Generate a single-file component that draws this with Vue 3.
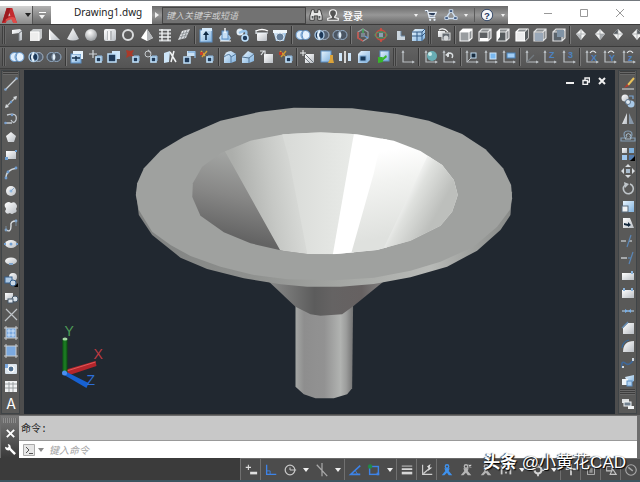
<script setup>
import { ref } from "vue";

const search = ref("");
const command = ref("");

// small building blocks shared by the 16x16 icons
const p = (d, fill = "url(#silver)", extra = "") => `<path d="${d}" fill="${fill}" ${extra}/>`;
const line = (d, stroke = "#dfe3e6", w = 1.2) => `<path d="${d}" fill="none" stroke="${stroke}" stroke-width="${w}"/>`;
const dot = (x, y, r, fill = "url(#silver)", extra = "") => `<circle cx="${x}" cy="${y}" r="${r}" fill="${fill}" ${extra}/>`;
const rect = (x, y, w, h, fill = "url(#silver)", extra = "") =>
  `<rect x="${x}" y="${y}" width="${w}" height="${h}" fill="${fill}" ${extra}/>`;
const letter = (t, x, y, fill, size = 9) =>
  `<text x="${x}" y="${y}" fill="${fill}" font-size="${size}" font-weight="700" font-family="Liberation Sans, sans-serif">${t}</text>`;

const blueEdge = 'stroke="#5c8fc4" stroke-width="1"';
const smallCube = rect(8, 8, 5, 5, "#203a58", 'stroke="#bfe0fa" stroke-width="1.6"') + line("M9 7H14V12", "#8db9e2", 1);
const axes = line("M3 2V13H14", "#b9bec2", 1.2) + p("M1.500 4 3 1 4.500 4zM12 11.500 15 13 12 14.500z", "#b9bec2");
const cube = (face, edge) =>
  p("M2 5 5 2H14V11L11 14H2z", "#8c9093") + rect(2, 5, 9, 9, face) + line("M2 5 5 2H14V11L11 14H2V5H11V14M11 5 14 2", edge, 1.2);
const diamond = (a, b) => p("M8 2 13 7 8 13 3 7z", "#f3f4f4") + p(a, b) + line("M8 2V13M3 7H13", "#9da1a5", 0.7);
const figure = (c) =>
  dot(8, 4, 2, "none", `stroke="${c}" stroke-width="1.500"`) + p("M5 6H11L10 9 14 14H10L8 11 5 14H2L6 9z", c);

const icons = {
  polysolid: p("M3 3 11 2 13 4V13L10 14V6L3 7z") + line("M10 14V6L13 4", "#747a80", 1),
  box: p("M2 5 5 2H14V11L11 14H2z", "#c4c7c9") + rect(2, 5, 9, 9, "#ededed") + line("M2 5H11V14", "#fff", 1),
  wedge: p("M3 2 14 13H3z") + p("M3 2V13H5z", "#fff"),
  cone: p("M8 1 14 12Q8 15 2 12z"),
  sphere: dot(8, 8, 6, "url(#ball)"),
  cylinder: rect(2, 2, 12, 12, "url(#silver)", 'rx="2"') + rect(5, 4, 5, 9, "#b7babd") + rect(6, 4, 2, 9, "#f5f5f5"),
  torus: dot(8, 8, 5, "none", 'stroke="#dadcdd" stroke-width="2"'),
  pyramid: p("M8 2 14 11 8 14 2 11z", "#fff") + p("M8 2 14 11 8 14z", "#b4b7ba"),
  helix: line("M2 3H14M2 6.500H14M2 10H14M2 13.500H14", "#c9ccce", 1.8) + line("M5 2V14M11 3V14", "#f1f3f3", 1.4),
  planar: p("M6 4 14 2 10 11 2 13z") + line("M8 4 5 12M11 3 8 12M5 7 13 5M3 10 11 8", "#888d91", 0.8),
  press: rect(2, 3, 12, 12, "url(#sky)", blueEdge) + rect(4, 1, 10, 3, "#d5eafc") + line("M8 13V6", "#102a44", 1.6) + p("M5 8 8 4 11 8z", "#102a44"),
  extrude: p("M2 11 4 8H12L14 11 12 14H4z", "url(#sky)") + rect(5, 4, 6, 8, "#c6dff4", blueEdge) + line("M8 6V1", "#fff", 1.3) + line("M3 14H14", "#fff", 1),
  sweep: dot(5, 5, 3.5, "#e2edf6") + line("M4 6Q13 1 11 8", "#9bc5e9", 2.5) + dot(10, 11, 3, "#203a58", 'stroke="#bfe0fa" stroke-width="1.600"'),
  revolve: line("M2 4Q8 1 14 4", "#fff", 1.3) + rect(3, 6, 10, 8, "url(#silver)", 'rx="1"') + line("M2 6H14M2 3V7", "#edf5fb", 1),
  loft: p("M1 3H15L12 14H4z", "url(#sky)") + rect(1, 3, 14, 3, "#eef6fb") + dot(8, 10, 4, "#657e98", 'stroke="#d9e7f3"'),
  union: p("M5 4A4 4 0 0 0 5 12H11A4 4 0 0 0 11 4z", "#e6f2fd") + dot(5.5, 8, 4.5, "#dcecfb", blueEdge) + dot(10.5, 8, 4.5, "#e6f2fd", blueEdge) + line("M8 4.500Q6 8 8 11.500", "#5c8fc4", 1),
  subtract: dot(10.5, 8, 4.5, "#536071", 'stroke="#a4b4c6"') + dot(5.5, 8, 4.5, "#1c3858", 'stroke="#a9c8e4" stroke-width="1.300"') + line("M6 4A5 5 0 0 0 6 12", "#e4f1fa", 2.2),
  intersect: dot(5.5, 8, 4.5, "#4b5663", 'stroke="#94adc7"') + dot(10.5, 8, 4.5, "#4b5663", 'stroke="#94adc7"') + p("M8 4.500A5 5 0 0 1 8 11.500A5 5 0 0 1 8 4.500z", "#e4f1fa"),
  gizmoMove: line("M8 2 13 5V11L8 14 3 11V5z", "#9da5ab", 1.2) + line("M8 8V2", "#42b35f", 1.4) + line("M3 5V11L8 14", "#c94d44", 1.4) + line("M8 8 13 11", "#629de0", 1.4) + rect(6, 6, 4, 4, "#7b8791"),
  gizmoTurn: dot(8, 8, 5, "none", 'stroke="#c94a40" stroke-width="1.400"') + `<ellipse cx="8" cy="8" rx="6" ry="3" fill="none" stroke="#4fa667"/>` + rect(6, 6, 4, 4, "#8c9fb0") + line("M8 1V4M8 12V15", "#d44d42", 1.5),
  gizmoOff: p("M5 4H9V9H13V13H5z", "#cbd6df") + p("M9 4V9H13", "none", 'stroke="#6b87a3"'),
  meshBox: p("M2 5 5 2H15V11L12 14H2z", "url(#sky)") + line("M2 5H12V14M12 5 15 2M7 5V14M2 9H12L15 6", "#315984", 1),
  sectionBox: p("M2 4H9V10H2z", "url(#silver)") + rect(6, 6, 8, 7, "#626970", 'stroke="#dedfe0"') + dot(10, 11, 2.5, "#d5d8da") + line("M3 3Q8 0 12 5", "#f3f4f4"),
  viewTop: cube("#999da0", "#f3f4f4") + p("M2 5 5 2H14L11 5z", "#fff"),
  viewBottom: cube("#5c6063", "#e4e5e6") + rect(3, 11, 8, 3, "#fff"),
  viewLeft: cube("#555a5d", "#e4e5e6") + p("M2 5 5 2V10L2 14z", "#fff"),
  viewRight: cube("#ebeced", "#fff") + p("M11 5 14 2V11L11 14z", "#595e61"),
  viewFront: cube("#929698", "#dfe0e1") + rect(3, 6, 8, 8, "#9aa8b8"),
  viewBack: cube("#5a636b", "#dfe0e1") + rect(6, 3, 7, 7, "#8093a5"),
  isoSW: diamond("M3 7 8 8 8 13z", "#b4b8bb"),
  isoSE: diamond("M8 7 13 7 8 13z", "#a8acb0"),
  isoNE: diamond("M8 2 3 7 8 7z", "#585e63"),
  isoNW: diamond("M8 2 13 7 8 7z", "#585e63"),
  faceExtrude: rect(2, 5, 10, 9, "url(#sky)", blueEdge) + p("M4 2H14V10H12V5H4z", "#e7f3fc") + line("M3 9H11M7 7V12", "#16304b", 1.4),
  faceMove: line("M5 1V9M1 5H9", "#cfd4d8", 1.2) + smallCube,
  faceOffset: rect(6, 2, 8, 8, "#cfe6f9") + rect(2, 5, 8, 8, "#203a58", 'stroke="#bfe0fa" stroke-width="1.500"'),
  faceDelete: p("M1 1 5 2 9 1 7 5 9 8 5 7 1 9 2 5z", "#a93a2a") + smallCube,
  faceRotate: dot(5, 5, 3, "none", 'stroke="#c4c9cd"') + line("M5 1 8 4", "#c4c9cd") + smallCube,
  faceTaper: p("M2 4 8 2 7 13 2 14z", "#cde5f8") + line("M8 3 14 13M12 2 9 13", "#f1f3f4", 1.5),
  faceCopy: rect(6, 2, 8, 5, "#cbe2f5") + line("M7 3H14V9", "#87b4df", 1.3) + rect(3, 8, 6, 6, "#203a58", 'stroke="#bfe0fa" stroke-width="1.500"'),
  faceColor: line("M2 2 6 7M8 2 3 8", "#d7a335", 1.4) + rect(1, 3, 3, 3, "#c5412d") + smallCube,
  edgeFillet: p("M2 8Q3 2 9 2L14 5V12L9 14H2z", "url(#sky)") + line("M2 8Q8 3 9 8V14M9 8 14 5", "#52799f", 1),
  edgeChamfer: p("M2 8 8 2 14 5V12L9 14H2z", "url(#sky)") + line("M2 8 9 9V14M9 9 14 5", "#527291", 1),
  edgeCopy: rect(5, 5, 9, 9) + line("M1 2H6V6M5 2 2 6", "#dfe3e6"),
  edgeColor: line("M2 2 7 7M8 2 3 8", "#d19a31", 1.4) + rect(1, 3, 3, 3, "#b83b2b") + smallCube,
  imprint: rect(5, 5, 9, 9) + line("M5 5 14 14M5 9 10 14", "#747c83", 1) + line("M3 1V7M0 4H6", "#f1f3f4", 1),
  clean: rect(2, 2, 10, 11, "url(#sky)", blueEdge) + p("M11 6H14V10L15 14H9L11 10z", "#dba33a"),
  separate: rect(2, 4, 3, 8, "#cfe6fa") + rect(11, 4, 3, 8, "#cfe6fa") + line("M8 2V14", "#fff", 1.5),
  shell: p("M2 5 5 2H14V11L11 14H2z", "url(#sky)") + rect(4, 7, 6, 5, "#193958", 'stroke="#80abd4"'),
  check: rect(5, 2, 9, 10, "url(#sky)", blueEdge) + p("M3 8 8 8 7 9.500 11 6 12 8 8 11.500V13L3 14z", "#38b52d"),
  ucs: axes,
  ucsWorld: axes + dot(9, 7, 5, "#68adb4") + dot(7, 5, 2, "#c9ecea"),
  ucsPrev: axes + line("M7 8Q5 4 9 4Q13 5 11 9", "#d9dddf", 1.5) + p("M4 6 8 3V8z", "#d9dddf"),
  ucsFace: axes + rect(7, 4, 6, 6, "#7ab8ef", 'stroke="#cfe6fa"'),
  ucsObject: axes + line("M3 13 8 8", "#b9bec2", 1) + rect(7, 4, 5, 5, "#172b3e", 'stroke="#c5e1f5"'),
  ucsView: axes + rect(6, 4, 8, 5, "#a3cef5", 'stroke="#4881b8"'),
  ucsOrigin: axes + line("M3 13 10 6", "#71797f"),
  ucsZ: axes + letter("Z", 7, 9, "#4d82c0"),
  ucs3: axes + letter("3", 7, 9, "#4d82c0"),
  ucsX: axes + letter("X", 7, 12, "#4d82c0") + line("M6 4Q9 0 12 4", "#e4e7e9"),
  ucsY: axes + letter("Y", 7, 12, "#4d82c0") + line("M6 4Q9 0 12 4", "#e4e7e9"),
  ucsZr: axes + letter("z", 7, 12, "#4d82c0") + line("M6 4Q9 0 12 4", "#e4e7e9"),

  line: line("M3 13 13 3", "#cfd4d8") + dot(2.5, 13.5, 1.3, "#81a5ce") + dot(13.5, 2.5, 1.3, "#81a5ce"),
  xline: line("M3 13 13 3", "#c1c6c9") + p("M2 14 3 10 6 13zM14 2 10 3 13 6z", "#d4d8da") + dot(8, 8, 1.2, "#6d9bce"),
  pline: line("M4 4Q15 1 13 9Q11 14 8 9M2 12H9", "#c4cad0", 1.3) + dot(2.5, 12, 1.3, "#789fcd") + dot(9, 4, 1.3, "#789fcd"),
  polygon: p("M8 3 13 7 11 13H5L3 7z"),
  rectangle: rect(3, 4, 10, 8) + rect(2, 10, 3, 3, "#6e9ed0") + rect(12, 3, 2, 2, "#6e9ed0"),
  arc: line("M3 14Q2 5 14 3", "#cfd5d9", 1.3) + dot(3, 13, 1.4, "#719fd2") + dot(5, 7, 1.4, "#719fd2") + dot(13, 3, 1.4, "#719fd2"),
  circle: dot(8, 8, 5) + dot(8, 8, 1.5, "#8eb7df") + line("M8 8 11 5", "#86aad0", 1),
  revcloud: p("M3 3Q6 1 8 3Q12 1 13 4Q15 6 13 9Q15 12 11 13Q9 15 7 13Q3 15 2 11Q4 9 2 7Q1 4 3 3z"),
  spline: line("M3 12Q8 15 8 8Q7 3 13 3", "#d7dce0", 1.4) + dot(3, 12, 1.4, "#83a9d3") + dot(13, 3, 1.4, "#83a9d3") + line("M3 13V8M13 8V3", "#7f95aa", 0.8),
  ellipse: `<ellipse cx="8" cy="8" rx="6" ry="4" fill="url(#silver)"/>` + dot(8, 8, 1.5, "#719fd2") + rect(1, 7, 2, 2, "#719fd2") + rect(13, 7, 2, 2, "#719fd2"),
  ellipseArc: `<ellipse cx="8" cy="7" rx="6" ry="3.500" fill="url(#silver)"/>` + rect(6, 9, 4, 2, "#84a7cd"),
  insert: dot(10, 5, 4) + rect(2, 5, 7, 6, "#adc9e4", 'stroke="#37618e"') + dot(10, 11, 3, "#c9d8e6", 'stroke="#37618e"') + p("M15 11V15H11z", "#000"),
  block: rect(2, 4, 8, 7) + dot(12, 10, 3, "#d8e1e9", 'stroke="#46586a"') + rect(5, 10, 5, 4, "#dfe6ed", 'stroke="#46586a"'),
  point: line("M3 2Q7 6 14 13M2 14 14 2", "#bfc4c8"),
  hatch: rect(3, 3, 10, 10, "#7ba9df") + line("M4 6H12M4 10H12M6 4V12M10 4V12", "#dbeafa", 0.8) + line("M1 3H15M1 13H15M3 1V15M13 1V15", "#c9cdd0", 1),
  gradient: rect(3, 3, 10, 10, "#7ba9df") + line("M1 3H15M1 13H15M3 1V15M13 1V15", "#c9cdd0", 1),
  region: rect(2, 3, 12, 10, "#dce6ee", 'rx="1"') + dot(8, 8, 3, "#4f7090", 'stroke="#fff" stroke-width="1.200"') + rect(2, 3, 3, 4, "#7ba9df"),
  table: rect(2, 3, 12, 11, "#f0f2f3") + line("M2 6H14M2 10H14M6 4V14M10 4V14", "#92979b", 0.9),
  text: `<text x="8" y="13" text-anchor="middle" fill="#fff" font-size="14" font-family="Inter, sans-serif">A</text>`,

  erase: line("M14 2 8 9", "#e8c15a", 2) + p("M7 8 9 10 4 12z", "#b63e30") + line("M2 13H14", "#dadddf", 1),
  copy: dot(5, 5, 3.5) + dot(11, 11, 3.5, "#a8c8e6") + line("M9 3H13V6", "#79a6d3") + dot(8, 9, 2.5, "#dde8f1", 'stroke="#5d7690"'),
  mirror: p("M7 2V13H2z") + p("M9 2V13H14z", "#8797a8"),
  offset: line("M1 13H15V10H11Q14 3 8 3Q2 3 5 10H1z", "#829bb2", 1.2) + line("M5 11H11Q9 8 11 7Q8 4 6 7Q8 8 5 11z", "#a9bdcd", 1),
  array: rect(2, 2, 5, 5) + rect(9, 2, 5, 5, "#7fb1de") + rect(2, 9, 5, 5, "#a0c7ed") + rect(9, 9, 5, 5, "#547db0") + p("M15 10V15H10z", "#000"),
  move: p("M8 1 11 4H5zM8 15 5 12H11zM1 8 4 5V11zM15 8 12 11V5z", "#d8dcdf") + rect(6, 6, 4, 4, "#a9bccd"),
  rotate: line("M5 4A5 5 0 1 0 10 3", "#bfc5c9", 1.6) + p("M4 1 9 3 5 7z", "#bfc5c9"),
  scale: rect(3, 3, 11, 11, "url(#sky)") + rect(2, 8, 6, 6, "#f1f3f4", 'stroke="#596b7c"'),
  stretch: p("M3 3H10L14 13H3z") + p("M4 8 8 9V7L11 10 8 12V11L4 10z", "#14283c"),
  trim: line("M1 8H6M9 8H12", "#b5babd", 1.3) + line("M11 2 7 14", "#5a86b6", 1.2),
  extend: line("M1 8H7", "#d1d5d8", 1.3) + line("M8 8H11", "#5a86b6") + line("M13 2 9 14", "#5a86b6"),
  breakPoint: rect(2, 5, 12, 7) + rect(11, 3, 2, 3, "#8ab5df"),
  breakTwo: rect(2, 5, 12, 8) + rect(3, 3, 2, 3, "#8ab5df") + rect(11, 3, 2, 3, "#8ab5df"),
  join: line("M2 8H14", "#a7c3de", 1.2) + p("M5 6 8 8 5 10zM11 6 8 8 11 10z", "#76aee7"),
  chamfer: p("M3 14V8L8 3H14V14z") + line("M2 8 8 2", "#618bb5"),
  fillet: p("M3 14Q3 3 14 3V14z") + line("M2 10Q3 3 9 2", "#376a9e"),
  blend: line("M2 13Q1 5 5 8Q9 12 14 4", "#3f689a", 1.6) + rect(2, 11, 2, 2, "#ced7df") + rect(12, 3, 2, 3, "#ced7df"),
  explode: p("M5 4 14 2V8L8 11z", "url(#sky)") + rect(2, 6, 6, 6, "#eff4f8") + rect(7, 8, 5, 5, "#b0d1ef", blueEdge),
  order: rect(2, 3, 7, 4, "#dfe2e4") + rect(4, 6, 7, 4, "#71808e", 'stroke="#f1f3f4"') + rect(8, 10, 6, 3, "#f1f3f4"),

  infer: line("M2 5H8M5 2V8", "#e0e0e0") + rect(7, 10, 8, 3, "#e0e0e0"),
  ortho: line("M3 2V13H14", "#3d83e8", 1.5) + line("M3 9H7V13", "#3d83e8", 1),
  polar: dot(8, 8, 5.5, "none", 'stroke="#c9c9c9" stroke-width="1.400"') + line("M8 8H15M8 8V5", "#c9c9c9"),
  isodraft: line("M2 2 14 15M8 0V15", "#a9a9a9", 1.4),
  track: line("M14 3 3 13H14", "#3d83e8", 1.8) + line("M8 8 11 13", "#3d83e8", 1),
  osnap: rect(3, 4, 10, 9, "none", 'stroke="#3d83e8" stroke-width="1.600"') + dot(3.5, 4, 2.5, "#218a46") + rect(11, 11, 3, 3, "#3d83e8"),
  weight: rect(2, 3, 12, 1, "#d6d6d6") + rect(2, 6, 12, 2, "#d6d6d6") + rect(2, 10, 12, 3, "#d6d6d6"),
  ducs: line("M3 2V13H14M4 12 11 6", "#d0d0d0", 1.3) + p("M8 4 12 1 11 5 14 5 9 9 10 6z", "#e0e0e0"),
  annoVisible: figure("#3f91ec"),
  annoAuto: figure("#b5b5b5") + line("M11 2 14 5M14 2 11 5", "#ddd"),
  annoScale: figure("#b5b5b5"),
  ratio: rect(2, 3, 2, 10, "#ccc") + rect(7, 5, 2, 2, "#ccc") + rect(7, 10, 2, 2, "#ccc") + rect(12, 3, 2, 10, "#ccc"),
  workspace: dot(8, 8, 4, "none", 'stroke="#d5d5d5" stroke-width="2.400"') + line("M8 1V4M8 12V15M1 8H4M12 8H15", "#d5d5d5", 2),
  monitor: line("M8 1V14M2 7H14", "#e0e0e0", 1.8),
  isolate: rect(4, 3, 8, 10, "none", 'stroke="#b9b9b9"') + line("M7 6V11M9 6V11", "#b9b9b9"),
  hardware: line("M3 4H9V9H3zM7 13 10 7 14 13z", "#c5c5c5"),
  cleanScreen: dot(8, 8, 6, "none", 'stroke="#a9a9a9" stroke-width="1.300"') + line("M5 5 10 9", "#a9a9a9", 1.5)
};

// "|" is a divider, "#" is the grip where the next toolbar begins
const toolbars = [
  {
    name: "modeling",
    items: ("polysolid box wedge cone sphere cylinder torus pyramid helix planar | press extrude sweep revolve loft | " +
      "union subtract intersect | gizmoMove gizmoTurn gizmoOff meshBox # sectionBox | " +
      "viewTop viewBottom viewLeft viewRight viewFront viewBack | isoSW isoSE isoNE isoNW").split(" ")
  },
  {
    name: "solid-editing",
    items: ("union subtract intersect | faceExtrude faceMove faceOffset faceDelete faceRotate faceTaper faceCopy faceColor | " +
      "edgeFillet edgeChamfer edgeCopy edgeColor | imprint clean separate shell check # ucs | ucsWorld ucsPrev | " +
      "ucsObject ucsFace ucsView | ucsOrigin ucsZ ucs3 | ucsX ucsY ucsZr").split(" ")
  }
];

const drawTools = ("line xline pline polygon rectangle arc circle revcloud spline ellipse ellipseArc insert block point " +
  "hatch gradient region table text").split(" ");

const modifyTools = ("erase copy mirror offset array move rotate scale stretch trim extend breakPoint breakTwo join " +
  "chamfer fillet blend explode").split(" ");

// "v" opens the menu of the tool before it
const statusTools = ("infer ortho polar v isodraft v track osnap v weight ducs annoVisible annoAuto annoScale ratio v " +
  "workspace v monitor isolate hardware cleanScreen").split(" ");
const divided = ["infer", "ortho", "track", "weight", "ducs", "annoVisible", "monitor", "isolate", "hardware", "cleanScreen"];
</script>

<template>
  <div class="app">
    <!-- shared fills -->
    <svg class="defs" width="0" height="0" aria-hidden="true">
      <defs>
        <linearGradient id="silver" x1="0" y1="0" x2="1" y2="1">
          <stop offset="0" stop-color="#ffffff" />
          <stop offset="1" stop-color="#b9bec4" />
        </linearGradient>
        <linearGradient id="sky" x1="0" y1="0" x2="1" y2="1">
          <stop offset="0" stop-color="#e8f4fd" />
          <stop offset="1" stop-color="#7fb1de" />
        </linearGradient>
        <radialGradient id="ball" cx="0.4" cy="0.3" r="0.8">
          <stop offset="0" stop-color="#ffffff" />
          <stop offset="1" stop-color="#8b8f93" />
        </radialGradient>
      </defs>
    </svg>

    <header class="titlebar">
      <button class="app-menu" aria-label="Application menu">
        <svg class="logo" viewBox="0 0 16 18">
          <path d="M5 1H11L16 17H12L10 12 6 13 4 17H0z" fill="#c32b2e" />
          <path d="M7 5 9 9 6 10z" fill="#d4c5c5" />
          <path d="M0 17 6 13 9 1H5z" fill="#9c1b20" />
          <path d="M4 13Q11 9 14 12L16 17H12L10 13 4 15z" fill="#df4c49" />
        </svg>
        <i class="caret dark"></i>
      </button>
      <button class="quick" aria-label="Customize quick access"><i class="bar"></i><i class="caret"></i></button>
      <span class="doc">Drawing1.dwg</span>
      <div class="infocenter">
        <button class="expand" aria-label="Expand search"><i class="caret side-caret"></i></button>
        <input v-model="search" class="search" type="text" aria-label="搜索" placeholder="键入关键字或短语" />
        <button class="tool find" aria-label="Find">
          <svg viewBox="0 0 16 16">
            <path d="M3 2H6V5H10V2H13L15 9V14H10V9H6V14H1V9z" fill="#e8e8e8" stroke="#333" />
            <path d="M3 9H5V12H3zM11 9H13V12H11z" fill="#55595c" />
          </svg>
        </button>
        <button class="login">
          <svg viewBox="0 0 16 16">
            <path d="M8 2Q12 2 12 6Q12 8 10 10V11L14 12V14H2V12L6 11V10Q4 8 4 6Q4 2 8 2z" fill="#555" stroke="#f5f5f5" stroke-width="1.4" />
          </svg>
          登录
        </button>
        <span class="space"></span>
        <button class="drop" aria-label="Account menu"><i class="caret small"></i></button>
        <button class="tool" aria-label="App store">
          <svg viewBox="0 0 16 16">
            <path d="M1 3H4L6 11H13M5 5H14L12 9H6" fill="#2d3f5b" stroke="#e4edf8" stroke-width="1.4" />
            <circle cx="7" cy="13.500" r="1.300" fill="#e4edf8" />
            <circle cx="12" cy="13.500" r="1.300" fill="#e4edf8" />
          </svg>
        </button>
        <button class="tool" aria-label="Connected services">
          <svg viewBox="0 0 16 16">
            <path d="M8 3 14 12H2z" fill="none" stroke="#cfe0f2" stroke-width="1.6" />
            <path d="M6 2H10V5H6zM1 10H5V13H1zM11 10H15V13H11z" fill="#2e4b77" stroke="#dce9f7" />
          </svg>
        </button>
        <button class="drop" aria-label="Services menu"><i class="caret small"></i></button>
        <button class="tool help" aria-label="Help">
          <svg viewBox="0 0 16 16">
            <circle cx="8" cy="8" r="6.500" fill="#f4f7fb" stroke="#24395c" />
            <text x="8" y="12" text-anchor="middle" font-size="11" font-weight="700" font-family="Liberation Sans, sans-serif" fill="#1d3765">?</text>
          </svg>
        </button>
        <button class="drop" aria-label="Help menu"><i class="caret small"></i></button>
      </div>
      <div class="window-buttons">
        <button aria-label="Minimize"><svg viewBox="0 0 10 10"><path d="M1 5.500H9" /></svg></button>
        <button aria-label="Maximize"><svg viewBox="0 0 10 10"><path d="M1.500 1.500H8.500V8.500H1.500z" /></svg></button>
        <button aria-label="Close"><svg viewBox="0 0 10 10"><path d="M1 1 9 9M9 1 1 9" /></svg></button>
      </div>
    </header>

    <nav v-for="bar in toolbars" :key="bar.name" class="toolbar" :class="bar.name">
      <i class="grip"></i>
      <template v-for="(item, i) in bar.items" :key="i">
        <i v-if="item === '|'" class="divider"></i>
        <i v-else-if="item === '#'" class="grip"></i>
        <button v-else :aria-label="item"><svg viewBox="0 0 16 16" v-html="icons[item]"></svg></button>
      </template>
    </nav>

    <main class="workspace">
      <nav class="side left">
        <i class="handle"></i>
        <button v-for="t in drawTools" :key="t" :aria-label="t"><svg viewBox="0 0 16 16" v-html="icons[t]"></svg></button>
      </nav>

      <section class="viewport">
        <svg class="scene" viewBox="0 0 590 344" role="img" aria-label="Funnel model">
          <defs>
            <linearGradient id="bowl" gradientUnits="userSpaceOnUse" x1="300" y1="420" x2="350" y2="180">
              <stop offset="0" stop-color="#636363" />
              <stop offset="0.500" stop-color="#878786" />
              <stop offset="1" stop-color="#a3a5a3" />
            </linearGradient>
            <linearGradient id="facetA" gradientUnits="userSpaceOnUse" x1="340" y1="220" x2="540" y2="190">
              <stop offset="0" stop-color="#acaeab" />
              <stop offset="0.500" stop-color="#c6c8c5" />
              <stop offset="1" stop-color="#dcdedb" />
            </linearGradient>
            <linearGradient id="facetB" gradientUnits="userSpaceOnUse" x1="500" y1="0" x2="700" y2="0">
              <stop offset="0" stop-color="#d9dbd8" />
              <stop offset="1" stop-color="#e9ebe8" />
            </linearGradient>
            <linearGradient id="facetC" gradientUnits="userSpaceOnUse" x1="780" y1="170" x2="830" y2="420">
              <stop offset="0" stop-color="#ffffff" />
              <stop offset="0.350" stop-color="#f2f3f1" />
              <stop offset="1" stop-color="#dfe1de" />
            </linearGradient>
            <linearGradient id="facetD" gradientUnits="userSpaceOnUse" x1="870" y1="240" x2="980" y2="300">
              <stop offset="0" stop-color="#fdfdfd" />
              <stop offset="0.350" stop-color="#dfe1de" />
              <stop offset="1" stop-color="#bdbfbc" />
            </linearGradient>
            <linearGradient id="rim" x1="0" y1="0" x2="1" y2="0">
              <stop offset="0" stop-color="#7f8180" />
              <stop offset="0.300" stop-color="#8e908e" />
              <stop offset="0.550" stop-color="#a5a7a4" />
              <stop offset="0.780" stop-color="#b8bab7" />
              <stop offset="1" stop-color="#878987" />
            </linearGradient>
            <linearGradient id="neck" x1="0" y1="0" x2="1" y2="0">
              <stop offset="0" stop-color="#8b8c8b" />
              <stop offset="0.400" stop-color="#5c5c5c" />
              <stop offset="0.550" stop-color="#656363" />
              <stop offset="0.800" stop-color="#666161" />
              <stop offset="1" stop-color="#858484" />
            </linearGradient>
            <linearGradient id="stem" x1="0" y1="0" x2="1" y2="0">
              <stop offset="0" stop-color="#a5a7a5" />
              <stop offset="0.150" stop-color="#8e8e8e" />
              <stop offset="0.500" stop-color="#929292" />
              <stop offset="0.780" stop-color="#b1b3b1" />
              <stop offset="0.880" stop-color="#9c9d9c" />
              <stop offset="1" stop-color="#727272" />
            </linearGradient>
            <linearGradient id="green">
              <stop offset="0" stop-color="#0b5c12" />
              <stop offset="0.500" stop-color="#1f8026" />
              <stop offset="1" stop-color="#0a4f10" />
            </linearGradient>
            <clipPath id="mouth">
              <path d="M217 265 245 215 300 175 390 137 490 118 600 112 710 118 820 137 900 168 965 210 1000 255 1012 300 995 350 960 392 870 437 770 465 640 478 560 477 490 468 390 445 310 412 240 362 215 305z" />
            </clipPath>
          </defs>
          <g transform="translate(96 25) scale(0.3333)">
            <path d="M525 620V875L550 898 585 910H640L680 898 695 880 698 620z" fill="url(#stem)" />
            <path d="M440 555 525 635 570 658 600 662 665 658 700 632 795 555z" fill="url(#neck)" />
            <path d="M46 290 55 360 95 420 180 488 260 522 370 550 480 568 560 575H660L760 567 870 547 980 515 1070 467 1140 405 1170 360 1175 290z" fill="url(#rim)" />
            <path d="M46 300 50 265 70 220 120 167 190 125 300 77 420 50 520 38 695 40 830 57 925 77 1025 117 1095 163 1148 220 1172 270 1175 310 1168 345 1130 395 1060 455 960 500 870 527 760 548 640 556 500 553 400 540 300 515 210 483 150 450 95 410 55 345z" fill="#9fa19f" />
            <g clip-path="url(#mouth)">
              <path d="M200 100H1020V490H200z" fill="url(#bowl)" />
              <path d="M275 100 325 190 487 480V490H700V100z" fill="url(#facetA)" />
              <path d="M480 100 505 190 563 490H700V100z" fill="url(#facetB)" />
              <path d="M703 100 635 490H800V100z" fill="#ffffff" />
              <path d="M800 60 760 235 688 490H1020V60z" fill="url(#facetC)" />
              <path d="M960 100 920 185 775 490H1020V100z" fill="url(#facetD)" />
            </g>
          </g>
          <!-- UCS tripod -->
          <path d="M40 300 71 291 72 296 42 306z" fill="#b3252b" />
          <path d="M42 301 71 292" stroke="#e05a5a" />
          <rect x="38" y="269" width="5" height="34" fill="url(#green)" />
          <ellipse cx="40.500" cy="269" rx="2.500" ry="1.500" fill="#a3d7a0" />
          <path d="M38 304 40 301 64 313 62 318z" fill="#1761d2" />
          <circle cx="40" cy="303" r="2.500" fill="#4b8ff0" />
          <g class="axis-names">
            <text x="40" y="266" fill="#4d9b57">Y</text>
            <text x="69" y="289" fill="#bd3a42">X</text>
            <text x="62" y="315" fill="#2d6ed8">Z</text>
          </g>
        </svg>
        <div class="view-buttons">
          <button aria-label="Minimize view"><svg viewBox="0 0 8 8"><path d="M0 6H8" /></svg></button>
          <button aria-label="Restore view"><svg viewBox="0 0 8 8"><path d="M3 3V1H7.500V5H6M1 3.500H5.500V7.500H1z" stroke-width="1.4" /></svg></button>
          <button aria-label="Close view"><svg viewBox="0 0 8 8"><path d="M1 1 7 7M7 1 1 7" /></svg></button>
        </div>
      </section>

      <nav class="side right">
        <i class="handle"></i>
        <button v-for="t in modifyTools" :key="t" :aria-label="t"><svg viewBox="0 0 16 16" v-html="icons[t]"></svg></button>
        <i class="handle second"></i>
        <button aria-label="order"><svg viewBox="0 0 16 16" v-html="icons.order"></svg></button>
      </nav>
    </main>

    <section class="command">
      <div class="command-handle">
        <i class="dots"></i>
        <button aria-label="Close command line"><svg viewBox="0 0 12 12"><path d="M2 2 10 10M10 2 2 10" stroke="#fff" stroke-width="2" /></svg></button>
        <button aria-label="Customize">
          <svg viewBox="0 0 12 12"><path d="M4 4 11 11" stroke="#fff" stroke-width="2.600" /><path d="M3 0 4 3 3 4 0 3Q0 7 4 7 7 6 6 2 5 0 3 0z" fill="#fff" /></svg>
        </button>
      </div>
      <div class="command-body">
        <div class="history">命令:</div>
        <div class="prompt">
          <button aria-label="Recent commands">
            <svg viewBox="0 0 12 12"><path d="M.500.500H11.500V11.500H.500z" fill="#e6e6e6" stroke="#aaa" /><path d="M3 3 6 6 3 9M6 9.500H10" fill="none" stroke="#555" /></svg>
            <i class="caret grey"></i>
          </button>
          <input v-model="command" type="text" aria-label="命令" placeholder="键入命令" />
        </div>
      </div>
    </section>

    <footer class="status">
      <template v-for="(t, i) in statusTools" :key="i">
        <button v-if="t === 'v'" class="more" aria-label="More"><i class="caret"></i></button>
        <button v-else :class="{ divided: divided.includes(t) }" :aria-label="t"><svg viewBox="0 0 16 16" v-html="icons[t]"></svg></button>
      </template>
    </footer>

    <div class="watermark"><b>头条</b> @小黄花CAD</div>
  </div>
</template>

<style>
body {
  margin: 0;
  background: #3b3b3b;
}
</style>

<style scoped>
.app {
  position: relative;
  display: flex;
  flex-direction: column;
  height: 100vh;
  min-height: 460px;
  overflow: hidden;
  box-sizing: border-box;
  border-bottom: 2px solid #3c5560;
  background: #555;
  font-family: "Noto Sans", "Noto Sans CJK SC", sans-serif;
  font-size: 11px;
}

.defs {
  position: absolute;
}

button {
  display: flex;
  align-items: center;
  justify-content: center;
  padding: 0;
  border: 0;
  background: none;
  color: #fff;
  font: inherit;
}

svg {
  display: block;
  flex: none;
}

input {
  min-width: 0;
  padding: 0;
  border: 0;
  outline: 0;
  font: inherit;
}

.caret {
  border: 3px solid transparent;
  border-top: 4px solid #f0f0f0;
  border-bottom: 0;
}

.caret.dark {
  border-top-color: #222;
}

.caret.small {
  border-width: 3px 2px 0;
}

.caret.grey {
  border-top-color: #888;
}

.caret.side-caret {
  border: 3px solid transparent;
  border-left: 4px solid #f0f0f0;
  border-right: 0;
}

/* title bar */
.titlebar {
  display: flex;
  flex: none;
  align-items: flex-end;
  height: 24px;
  box-sizing: border-box;
  border-top: 1px solid #73787d;
  background: #fff;
}

.app-menu {
  gap: 8px;
  width: 33px;
  height: 18px;
  border-right: 1px solid #555;
  background: linear-gradient(#d2d2d2, #8a8a8a);
}

.logo {
  width: 15px;
  height: 17px;
}

.quick {
  flex-direction: column;
  gap: 2px;
  width: 18px;
  height: 18px;
  background: linear-gradient(#b0b0b0, #696969);
}

.quick .bar {
  width: 7px;
  height: 1px;
  background: #fff;
}

.doc {
  width: 101px;
  box-sizing: border-box;
  padding-left: 23px;
  color: #222;
  font-size: 10px;
  line-height: 23px;
  white-space: nowrap;
}

.infocenter {
  display: flex;
  flex: 1;
  align-items: center;
  height: 18px;
  background: linear-gradient(#6b6b6b, #979797 50%, #6a6a6a);
}

.expand {
  width: 10px;
  height: 18px;
}

.search {
  width: 144px;
  height: 17px;
  box-sizing: border-box;
  padding-left: 3px;
  border: 1px solid #444;
  background: #727272;
  color: #eee;
  font-style: italic;
  font-size: 9px;
}

.search::placeholder {
  color: #d0d0d0;
}

.tool {
  width: 20px;
}

.tool svg {
  width: 14px;
  height: 14px;
}

.login {
  gap: 3px;
  font-weight: 500;
  font-size: 10px;
}

.login svg {
  width: 14px;
  height: 14px;
}

.space {
  flex: 1;
}

.drop {
  width: 10px;
  height: 18px;
}

.help {
  width: 24px;
  margin-left: 3px;
  border-left: 1px solid #5c5c5c;
}

.window-buttons {
  display: flex;
  width: 132px;
  height: 23px;
  box-sizing: border-box;
  padding: 0 2px 0 22px;
}

.window-buttons button {
  flex: 1;
}

.window-buttons svg {
  width: 10px;
  height: 10px;
  fill: none;
  stroke: #999;
}

/* horizontal toolbars */
.toolbar {
  display: flex;
  flex: none;
  align-items: center;
  height: 22px;
  box-sizing: border-box;
  padding: 0 0 1px 1px;
  border-top: 1px solid #3b3b3b;
  background: linear-gradient(#626262, #545454);
}

.toolbar.modeling {
  margin-right: -6px;
}

.toolbar.solid-editing {
  padding-right: 2px;
}

.toolbar button {
  flex: 1;
  min-width: 0;
}

.toolbar svg {
  width: 16px;
  height: 16px;
}

.divider {
  width: 2px;
  height: 18px;
  margin: 0 1px;
  box-sizing: border-box;
  border-left: 1px solid #383838;
  border-right: 1px solid #777;
}

.grip {
  width: 4px;
  height: 18px;
  margin: 0 2px 0 1px;
  background: repeating-linear-gradient(90deg, #3e3e3e 0 1px, #686868 1px 2px);
}

/* drawing area with its side toolbars */
.workspace {
  display: flex;
  flex: 1;
  min-height: 0;
  box-sizing: border-box;
  padding: 1px 3px 1px 1px;
  border-top: 1px solid #3e3e3e;
  background: #4d4d4d;
}

.side {
  display: flex;
  flex: none;
  flex-direction: column;
  align-items: center;
  width: 19px;
  box-sizing: border-box;
  border: 1px solid #3f4447;
  background: #595958;
}

.left {
  margin-right: 4px;
}

.right {
  margin-left: 3px;
}

.side button {
  flex: 1;
  min-height: 0;
}

.side svg {
  width: 16px;
  height: 16px;
}

.handle {
  width: 15px;
  height: 4px;
  background: repeating-linear-gradient(#3e3e3e 0 1px, #686868 1px 2px);
}

.handle.second {
  height: 6px;
}

.viewport {
  position: relative;
  flex: 1;
  min-width: 0;
  background: #212830;
}

.scene {
  width: 100%;
  height: 100%;
}

.axis-names {
  font-family: "Liberation Sans", sans-serif;
  font-size: 14px;
}

.view-buttons {
  position: absolute;
  top: 7px;
  right: 9px;
  display: flex;
  gap: 8px;
}

.view-buttons svg {
  width: 8px;
  height: 8px;
  fill: none;
  stroke: #f0f0f0;
  stroke-width: 2;
}

/* command line */
.command {
  display: flex;
  flex: none;
  height: 43px;
  box-sizing: border-box;
  padding: 1px 3px 0 1px;
  background: #6d6d6d;
}

.command-handle {
  display: flex;
  flex-direction: column;
  align-items: center;
  gap: 5px;
  width: 18px;
  background: linear-gradient(#777, #3a3a3a);
}

.dots {
  width: 14px;
  height: 5px;
  margin-top: 2px;
  background: repeating-linear-gradient(90deg, #8e8e8e 0 1px, #6a6a6a 1px 2px);
}

.command-handle svg {
  width: 11px;
  height: 11px;
}

.command-body {
  display: flex;
  flex: 1;
  flex-direction: column;
  min-width: 0;
}

.history {
  flex: 1;
  padding: 5px 2px 0;
  border-bottom: 1px solid #999;
  background: #c8c8c8;
  color: #222;
  font-family: "Liberation Mono", "Noto Sans CJK SC", monospace;
  font-size: 10px;
  line-height: 18px;
}

.prompt {
  display: flex;
  gap: 5px;
  height: 17px;
  padding-left: 4px;
  background: #fff;
}

.prompt button {
  gap: 3px;
}

.prompt button svg {
  width: 12px;
  height: 12px;
}

.prompt input {
  flex: 1;
  background: none;
  font-style: italic;
  font-size: 10px;
}

.prompt input::placeholder {
  color: #a2a2a2;
}

/* status bar */
.status {
  display: flex;
  flex: none;
  justify-content: flex-end;
  height: 22px;
  background: #3b3b3b;
}

.status button {
  width: 20px;
  box-sizing: border-box;
  border-top: 1px solid #6a6a6a;
  background: #4c4c4c;
}

.status button.divided {
  border-left: 1px solid #707070;
}

.status button.more {
  width: 12px;
}

.status svg {
  width: 14px;
  height: 14px;
}

.watermark {
  position: absolute;
  right: 14px;
  bottom: 7px;
  color: #fff;
  font-family: "Liberation Sans", "Noto Sans CJK SC", sans-serif;
  font-size: 17px;
  line-height: 20px;
  white-space: nowrap;
  text-shadow: 1px 1px 1px #000, -1px 0 1px #333;
  pointer-events: none;
}
</style>
